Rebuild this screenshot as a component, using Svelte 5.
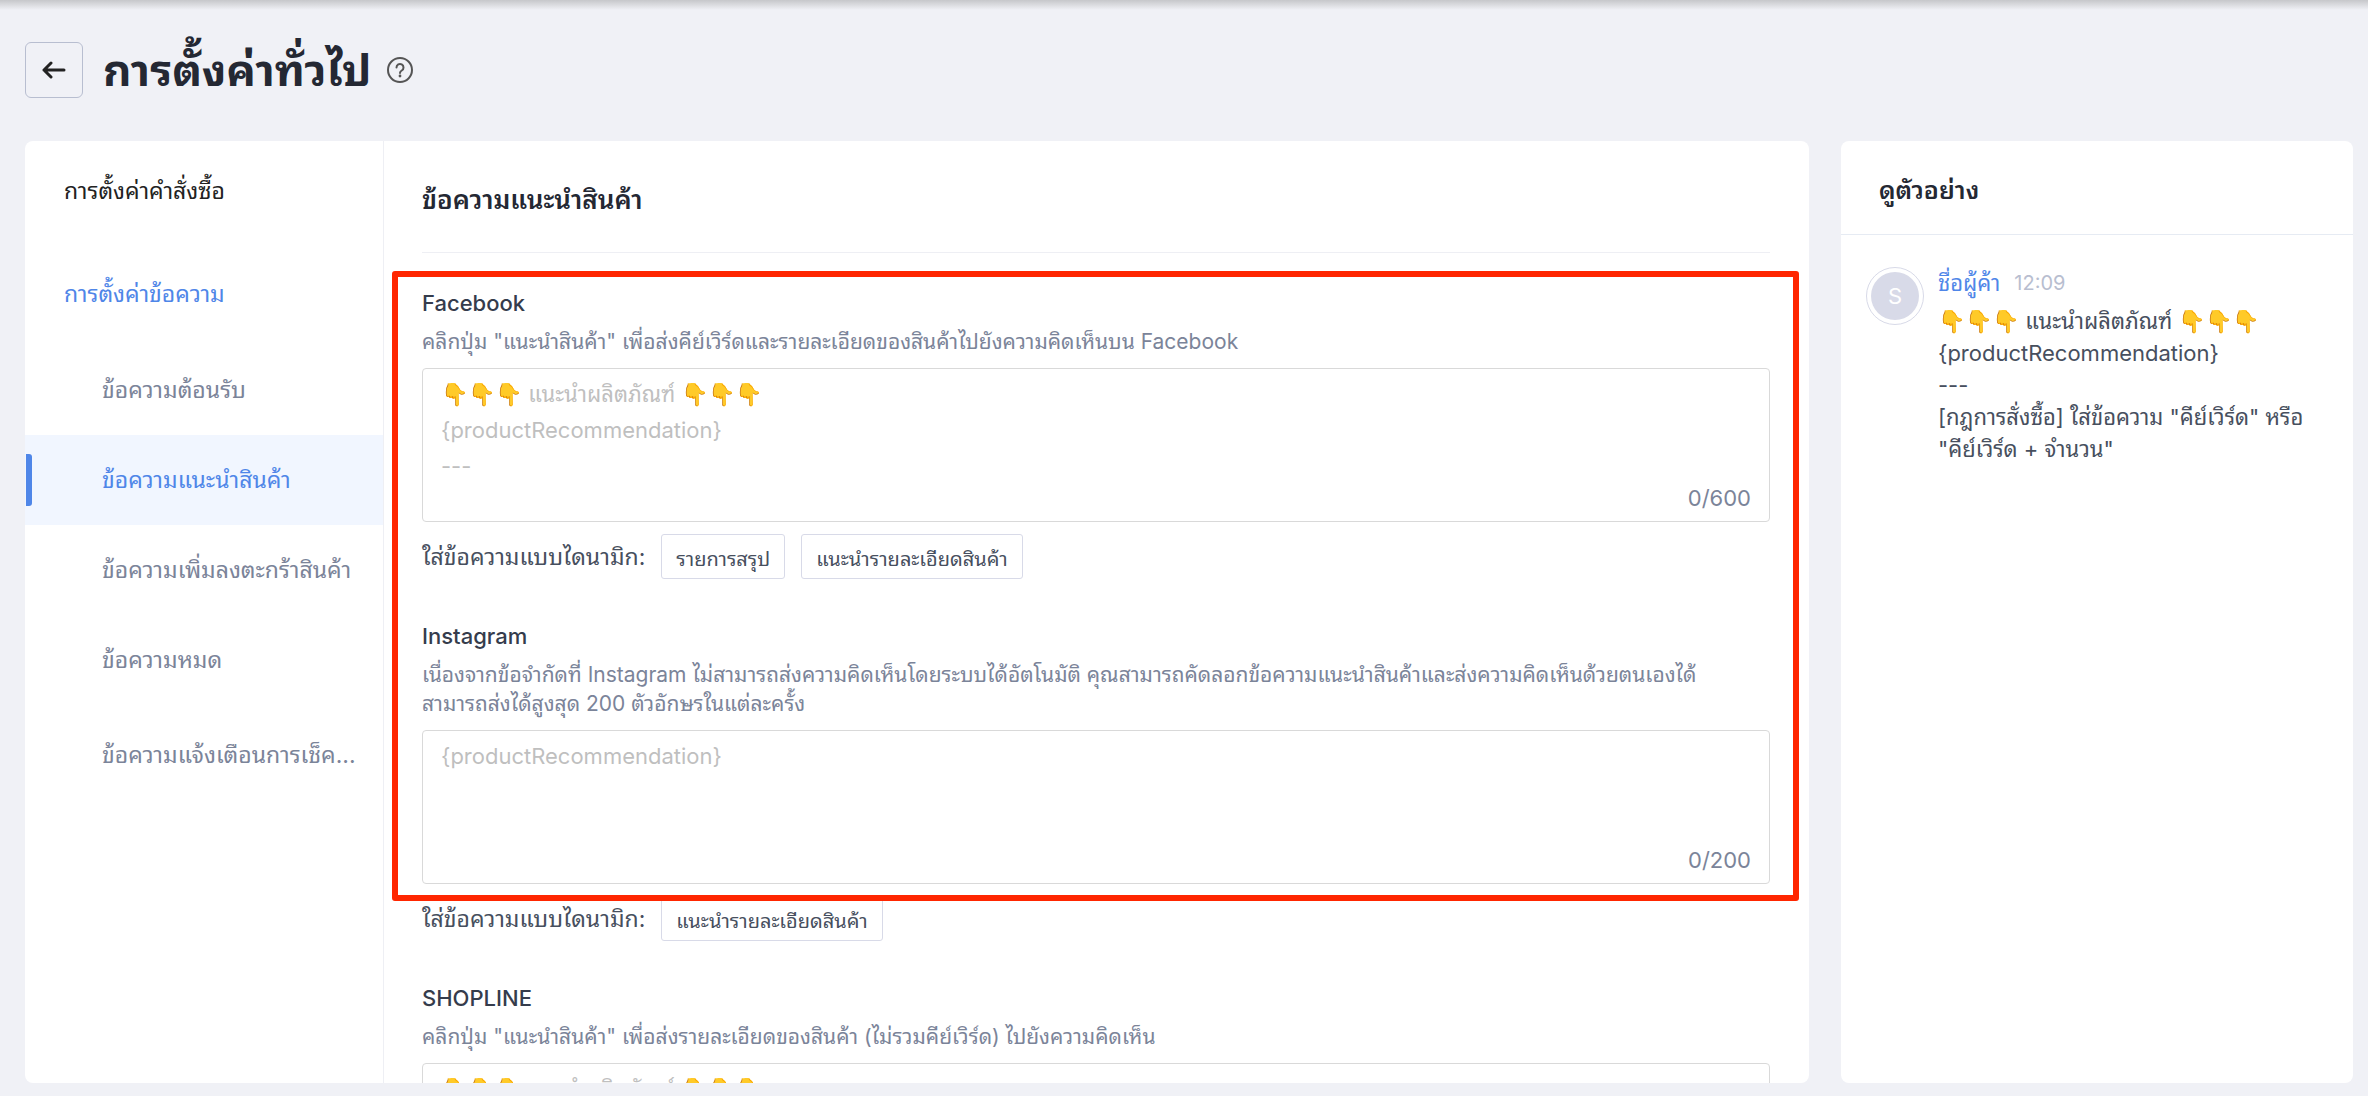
<script>
  const title = 'การตั้งค่าทั่วไป';

  const menu = [
    { label: 'ข้อความต้อนรับ' },
    { label: 'ข้อความแนะนำสินค้า', active: true },
    { label: 'ข้อความเพิ่มลงตะกร้าสินค้า' },
    { label: 'ข้อความหมด' },
    { label: 'ข้อความแจ้งเตือนการเช็ค...' }
  ];

  const template = '👇👇👇 แนะนำผลิตภัณฑ์ 👇👇👇\n{productRecommendation}\n---';

  let channels = $state([
    {
      id: 'facebook',
      name: 'Facebook',
      help: ['คลิกปุ่ม "แนะนำสินค้า" เพื่อส่งคีย์เวิร์ดและรายละเอียดของสินค้าไปยังความคิดเห็นบน Facebook'],
      placeholder: template,
      max: 600,
      tags: ['รายการสรุป', 'แนะนำรายละเอียดสินค้า'],
      text: ''
    },
    {
      id: 'instagram',
      name: 'Instagram',
      help: [
        'เนื่องจากข้อจำกัดที่ Instagram ไม่สามารถส่งความคิดเห็นโดยระบบได้อัตโนมัติ คุณสามารถคัดลอกข้อความแนะนำสินค้าและส่งความคิดเห็นด้วยตนเองได้',
        'สามารถส่งได้สูงสุด 200 ตัวอักษรในแต่ละครั้ง'
      ],
      placeholder: '{productRecommendation}',
      max: 200,
      tags: ['แนะนำรายละเอียดสินค้า'],
      text: ''
    },
    {
      id: 'shopline',
      name: 'SHOPLINE',
      help: ['คลิกปุ่ม "แนะนำสินค้า" เพื่อส่งรายละเอียดของสินค้า (ไม่รวมคีย์เวิร์ด) ไปยังความคิดเห็น'],
      placeholder: template,
      max: 600,
      tags: ['รายการสรุป', 'แนะนำรายละเอียดสินค้า'],
      text: ''
    }
  ]);

  function insertTag(channel, tag) {
    channel.text += `{${tag}}`;
  }
</script>

{#snippet channelForm(channel)}
  <section class="channel">
    <label class="name" for={channel.id}>{channel.name}</label>
    <div class="help">
      {#each channel.help as line}
        <p>{line}</p>
      {/each}
    </div>
    <div class="box">
      <textarea id={channel.id} placeholder={channel.placeholder} maxlength={channel.max} bind:value={channel.text}></textarea>
      <span class="count">{channel.text.length}/{channel.max}</span>
    </div>
    <div class="insert">
      <span>ใส่ข้อความแบบไดนามิก:</span>
      {#each channel.tags as tag}
        <button type="button" onclick={() => insertTag(channel, tag)}>{tag}</button>
      {/each}
    </div>
  </section>
{/snippet}

<div class="page">
  <header>
    <button class="back" type="button" aria-label="กลับ">
      <svg width="24" height="20" viewBox="0 0 24 20" fill="none" stroke="#222" stroke-width="3" stroke-linecap="round" stroke-linejoin="round">
        <path d="M22 10H2M9 3L2 10l7 7" />
      </svg>
    </button>
    <h1>{title}</h1>
    <svg class="hint" width="28" height="28" viewBox="0 0 28 28" fill="none" stroke="#555" stroke-width="2">
      <circle cx="14" cy="14" r="12" />
      <path d="M10.500 11.500a3.500 3.500 0 1 1 5.300 3c-1.200.7-1.800 1.300-1.800 2.600" stroke-linecap="round" />
      <circle cx="14" cy="20" r="1.400" fill="#555" stroke="none" />
    </svg>
  </header>

  <div class="columns">
    <div class="card settings">
      <nav>
        <a class="group" href="#order">การตั้งค่าคำสั่งซื้อ</a>
        <a class="group current" href="#message">การตั้งค่าข้อความ</a>
        <ul>
          {#each menu as item}
            <li><a class:active={item.active} href="#message">{item.label}</a></li>
          {/each}
        </ul>
      </nav>

      <main>
        <h2>ข้อความแนะนำสินค้า</h2>
        <div class="marked">
          {@render channelForm(channels[0])}
          {@render channelForm(channels[1])}
        </div>
        {@render channelForm(channels[2])}
      </main>
    </div>

    <aside class="card preview">
      <h2>ดูตัวอย่าง</h2>
      <div class="message">
        <div class="avatar"><span>S</span></div>
        <div class="body">
          <div class="meta"><span class="sender">ชื่อผู้ค้า</span><time>12:09</time></div>
          <p>{template + '\n[กฎการสั่งซื้อ] ใส่ข้อความ "คีย์เวิร์ด" หรือ "คีย์เวิร์ด + จำนวน"'}</p>
        </div>
      </div>
    </aside>
  </div>
</div>

<style>
  :global(body) { margin: 0; background: #f0f1f6; }
  * { box-sizing: border-box; }
  h1, h2, p, ul { margin: 0; padding: 0; }

  .page {
    display: flex;
    flex-direction: column;
    height: 100vh;
    padding: 0 15px 13px 25px;
    background: linear-gradient(#c6c7ca, #f0f1f6 10px);
    color: #474f5e;
    font-family: Inter, Thonburi, "Noto Sans Thai Looped", Loma, Garuda, Waree, Umpush, "Noto Sans Thai", "Noto Sans", sans-serif;
    font-size: 22px;
    line-height: 32px;
  }
  button, textarea { font-family: inherit; color: inherit; }

  header { display: flex; align-items: center; padding: 42px 0 43px; }
  .back { display: grid; place-items: center; width: 58px; height: 56px; padding: 0; background: none; border: 1px solid #b8bed0; border-radius: 6px; }
  h1 { margin: 0 14px 0 20px; font-size: 44px; line-height: 56px; font-weight: 700; color: #242833; }

  .columns { display: flex; flex: 1; gap: 32px; min-height: 0; }
  .card { background: #fff; border-radius: 8px; overflow: hidden; }
  .settings { display: flex; flex: 1; min-width: 0; }

  nav { width: 359px; flex: none; padding-top: 34px; border-right: 1px solid #eeeff4; font-size: 23px; }
  nav a { color: #7b8499; text-decoration: none; }
  .group { display: block; padding: 0 39px; color: #222; }
  .group.current { margin: 71px 0 35px; color: #4f86e8; }
  ul { list-style: none; }
  li a { position: relative; display: flex; align-items: center; height: 90px; padding-left: 77px; white-space: nowrap; }
  li:last-child a { height: 100px; }
  li a.active { color: #4f86e8; background: #f1f6ff; }
  li a.active::before { content: ""; position: absolute; left: 1px; width: 6px; height: 52px; background: #4f86e8; border-radius: 0 3px 3px 0; }

  main { flex: 1; min-width: 0; padding: 0 39px 0 38px; overflow-y: auto; scrollbar-width: none; }
  h2 { font-size: 26px; font-weight: 600; color: #242833; }
  main h2 { padding: 43px 0 36px; border-bottom: 1px solid #eeeff4; }

  .marked { position: relative; }
  .marked::after { content: ""; position: absolute; inset: 18px -29px 40px -30px; border: 6px solid #ff2600; border-radius: 3px; pointer-events: none; }

  .channel { padding-top: 42px; }
  .marked .channel:first-child { padding-top: 35px; }
  .name { display: block; line-height: 30px; font-weight: 500; color: #353c4c; }
  .help { margin: 9px 0 12px; font-size: 21px; line-height: 29px; color: #7b8499; }
  .box { position: relative; height: 154px; }
  textarea { display: block; width: 100%; height: 100%; padding: 7px 18px; border: 1px solid #d9d9d9; border-radius: 4px; background: none; resize: none; font-size: 22px; line-height: 36px; overflow: hidden; }
  textarea::placeholder { color: #bfbfbf; opacity: 1; }
  .count { position: absolute; right: 19px; bottom: 8px; color: #7b8499; }
  .insert { display: flex; align-items: center; gap: 16px; margin-top: 12px; font-size: 23px; }
  .insert button { height: 45px; padding: 0 14px; background: #fff; border: 1px solid #d8dae8; border-radius: 3px; font-size: 20px; }

  .preview { width: 512px; flex: none; }
  .preview h2 { padding: 33px 38px 28px; border-bottom: 1px solid #e6ebf3; font-size: 25px; }
  .message { display: flex; gap: 14px; padding: 32px 25px; }
  .avatar { flex: none; width: 58px; height: 58px; padding: 4px; border: 1px solid #d8dae8; border-radius: 50%; }
  .avatar span { display: grid; place-items: center; height: 100%; border-radius: 50%; background: #d8dae8; color: #fff; }
  .meta { display: flex; gap: 14px; height: 38px; }
  .sender { color: #4f86e8; }
  time { color: #b8bed0; font-size: 20px; }
  .body p { white-space: pre-line; }
</style>
